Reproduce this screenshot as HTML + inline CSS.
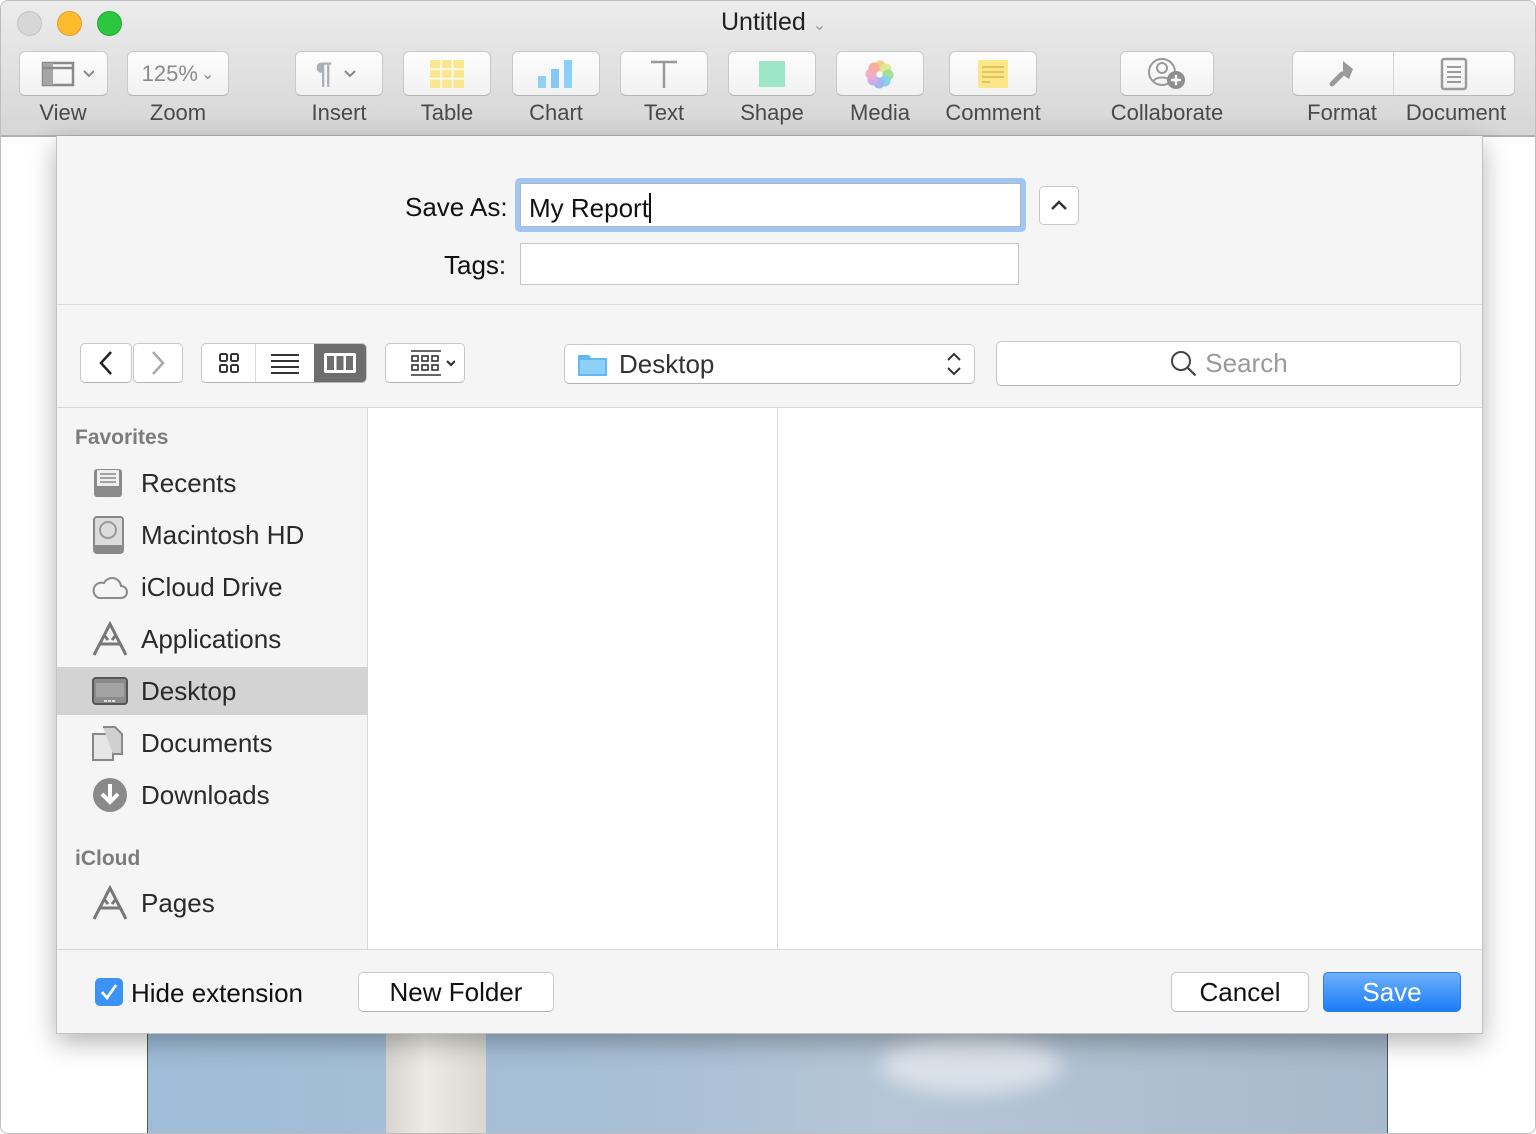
<!DOCTYPE html>
<html><head><meta charset="utf-8">
<style>
*{box-sizing:border-box;margin:0;padding:0}
body{width:1536px;height:1134px;overflow:hidden;background:#fff;font-family:"Liberation Sans",sans-serif;position:relative}
.abs{position:absolute}
#win{position:absolute;left:0;top:0;width:1536px;height:1134px;border:1px solid #bdbdbd;border-radius:8px;overflow:hidden;background:#fff}
#tb{position:absolute;left:0;top:0;width:1536px;height:136px;background:linear-gradient(#ececec,#d6d6d6);border-bottom:2px solid #b0b0b0}
.light{position:absolute;top:10px;width:25px;height:25px;border-radius:50%}
.btn{position:absolute;top:50px;height:45px;background:linear-gradient(#fdfdfd,#f1f1f1);border:1px solid #c9c9c9;border-bottom-color:#b5b5b5;border-radius:6px;display:flex;align-items:center;justify-content:center}
.lbl{position:absolute;top:99px;font-size:22px;color:#4a4a4a;text-align:center;transform:translateX(-50%);white-space:nowrap}
#dlg{position:absolute;left:56px;top:136px;width:1427px;height:898px;background:#f5f5f5;border:1px solid #c2c2c2;border-top:none;box-shadow:0 8px 25px rgba(0,0,0,.3)}
.sb{position:absolute;left:0;width:311px;height:48px;display:flex;align-items:center}
.sb span{position:absolute;left:84px;font-size:26px;color:#2a2a2a}
.sb svg{position:absolute;left:34px}
.pb{position:absolute;height:40px;background:#fff;border:1px solid #c8c8c8;border-bottom-color:#b3b3b3;border-radius:5px;display:flex;align-items:center;justify-content:center;font-size:26px;color:#111}
</style></head><body>
<div id="win">
<div id="tb">
 <div class="light" style="left:16px;background:#d7d7d7;border:1px solid #c3c3c3"></div>
 <div class="light" style="left:56px;background:#fdbb2e;border:1px solid #e1a02a"></div>
 <div class="light" style="left:96px;background:#2bc73f;border:1px solid #22a833"></div>
 <div class="abs" style="left:720px;top:7px;font-size:25px;color:#222">Untitled <span style="color:#999;font-size:16px">&#8964;</span></div>

 <div class="btn" style="left:18px;width:89px"><svg width="60" height="30"><rect x="9" y="4" width="30" height="22" fill="none" stroke="#8a8a8a" stroke-width="2.5"/><rect x="9" y="4" width="10" height="22" fill="#a5a5a5"/><line x1="9" y1="9" x2="39" y2="9" stroke="#8a8a8a" stroke-width="2.5"/><path d="M50 12l5 5 5-5" fill="none" stroke="#888" stroke-width="2"/></svg></div>
 <div class="btn" style="left:126px;width:102px;font-size:22px;color:#8a8a8a">125%<span style="font-size:16px;margin-left:3px">&#8964;</span></div>
 <div class="btn" style="left:294px;width:88px"><span style="font-size:30px;color:#aab0b8;font-weight:bold">¶</span><svg width="30" height="20"><path d="M13 7l5 5 5-5" fill="none" stroke="#888" stroke-width="2"/></svg></div>
 <div class="btn" style="left:402px;width:88px"><svg width="34" height="28"><rect width="34" height="28" fill="#fbe690"/><path d="M0 9.3h34M0 18.6h34M11.3 0v28M22.6 0v28" stroke="#fff" stroke-width="1.5"/></svg></div>
 <div class="btn" style="left:511px;width:88px"><svg width="36" height="28"><rect x="0" y="16" width="8" height="12" fill="#8fd0f3"/><rect x="13" y="9" width="8" height="19" fill="#86c9f0"/><rect x="26" y="0" width="8" height="28" fill="#8ccff6"/></svg></div>
 <div class="btn" style="left:619px;width:88px"><svg width="30" height="30"><path d="M2 3h26M15 3v26" stroke="#9a9a9a" stroke-width="2.5"/></svg></div>
 <div class="btn" style="left:727px;width:88px"><div style="width:26px;height:26px;background:#9ee6c8"></div></div>
 <div class="btn" style="left:835px;width:88px"><svg width="30" height="30"><g opacity=".8"><circle cx="15" cy="7" r="5.5" fill="#f9c56c"/><circle cx="21" cy="10" r="5.5" fill="#d6e97a"/><circle cx="23" cy="16" r="5.5" fill="#8fdb7d"/><circle cx="20" cy="22" r="5.5" fill="#6ec6e8"/><circle cx="14" cy="24" r="5.5" fill="#89a8ef"/><circle cx="8" cy="21" r="5.5" fill="#c29be8"/><circle cx="6" cy="15" r="5.5" fill="#ef9dc0"/><circle cx="9" cy="9" r="5.5" fill="#f59c8c"/></g></svg></div>
 <div class="btn" style="left:948px;width:88px"><svg width="30" height="28"><rect width="30" height="28" fill="#fce68a"/><path d="M4 7h22M4 12h22M4 17h22M4 22h8" stroke="#d9b950" stroke-width="1.5"/></svg></div>
 <div class="btn" style="left:1119px;width:94px"><svg width="44" height="34"><circle cx="17" cy="15" r="13" fill="none" stroke="#999" stroke-width="2"/><circle cx="17" cy="11" r="5" fill="none" stroke="#999" stroke-width="2"/><path d="M8 25c2-6 16-6 18 0" fill="none" stroke="#999" stroke-width="2"/><circle cx="31" cy="23" r="9" fill="#8e8e8e"/><path d="M31 18v10M26 23h10" stroke="#fff" stroke-width="2.5"/></svg></div>
 <div class="btn" style="left:1291px;width:223px;justify-content:flex-start">
  <div style="width:101px;height:100%;border-right:1px solid #d5d5d5;display:flex;align-items:center;justify-content:center"><svg width="34" height="32"><path d="M17 3l10 8-4 10-6-4z" fill="#9a9a9a"/><path d="M16 16l-10 10" stroke="#9a9a9a" stroke-width="5" stroke-linecap="round"/></svg></div>
  <div style="flex:1;display:flex;align-items:center;justify-content:center"><svg width="28" height="34"><rect x="2" y="2" width="24" height="30" rx="2" fill="none" stroke="#9a9a9a" stroke-width="2.5"/><path d="M7 10h14M7 15h14M7 20h14M7 25h14" stroke="#9a9a9a" stroke-width="2"/></svg></div>
 </div>

 <div class="lbl" style="left:62px">View</div>
 <div class="lbl" style="left:177px">Zoom</div>
 <div class="lbl" style="left:338px">Insert</div>
 <div class="lbl" style="left:446px">Table</div>
 <div class="lbl" style="left:555px">Chart</div>
 <div class="lbl" style="left:663px">Text</div>
 <div class="lbl" style="left:771px">Shape</div>
 <div class="lbl" style="left:879px">Media</div>
 <div class="lbl" style="left:992px">Comment</div>
 <div class="lbl" style="left:1166px">Collaborate</div>
 <div class="lbl" style="left:1341px">Format</div>
 <div class="lbl" style="left:1455px">Document</div>
</div>

<div class="abs" style="left:146px;top:1033px;width:1241px;height:101px;background:linear-gradient(90deg,#9fbdd8,#a8bfd6 40%,#b6c6d6 60%,#a7b9cc);border-left:1px solid #555;border-right:1px solid #555"></div>
<div class="abs" style="left:385px;top:1033px;width:100px;height:101px;background:linear-gradient(90deg,#d6d4cc,#ecebe6 40%,#d9d7d0)"></div>
<div class="abs" style="left:880px;top:1033px;width:180px;height:60px;border-radius:50%;background:rgba(235,238,242,.7);filter:blur(10px)"></div>
</div>

<div id="dlg">
 <div class="abs" style="left:0;top:0;width:1425px;height:169px;border-bottom:1px solid #dadada"></div>
 <div class="abs" style="left:348px;top:56px;font-size:26px;color:#111">Save As:</div>
 <div class="abs" style="left:458px;top:42px;width:511px;height:54px;background:#9fc6f5;border-radius:5px"></div>
 <div class="abs" style="left:463px;top:47px;width:501px;height:44px;background:#fff;border:1px solid #b5b5b5;font-size:26px;color:#111;padding:9px 0 0 8px">My Report<span style="display:inline-block;width:2px;height:30px;background:#111;vertical-align:-6px"></span></div>
 <div class="abs" style="left:982px;top:50px;width:40px;height:39px;background:#fff;border:1px solid #c8c8c8;border-radius:5px"><svg width="38" height="37"><path d="M12 22l7-7 7 7" fill="none" stroke="#333" stroke-width="2.5"/></svg></div>
 <div class="abs" style="left:387px;top:114px;font-size:26px;color:#111">Tags:</div>
 <div class="abs" style="left:463px;top:107px;width:499px;height:42px;background:#fff;border:1px solid #c5c5c5"></div>

 <div class="abs" style="left:0;top:170px;width:1425px;height:102px;border-bottom:1px solid #d8d8d8"></div>
 <div class="pb" style="left:23px;top:207px;width:52px"><svg width="20" height="28"><path d="M15 3L5 14l10 11" fill="none" stroke="#222" stroke-width="2.5"/></svg></div>
 <div class="pb" style="left:76px;top:207px;width:50px"><svg width="20" height="28"><path d="M5 3l10 11L5 25" fill="none" stroke="#aaa" stroke-width="2.5"/></svg></div>
 <div class="pb" style="left:144px;top:207px;width:166px;justify-content:flex-start;overflow:hidden">
  <div style="width:54px;height:100%;display:flex;align-items:center;justify-content:center;border-right:1px solid #ddd"><svg width="22" height="22"><g fill="none" stroke="#333" stroke-width="2"><rect x="2" y="2" width="7" height="7" rx="1.5"/><rect x="13" y="2" width="7" height="7" rx="1.5"/><rect x="2" y="13" width="7" height="7" rx="1.5"/><rect x="13" y="13" width="7" height="7" rx="1.5"/></g></svg></div>
  <div style="width:58px;height:100%;display:flex;align-items:center;justify-content:center"><svg width="30" height="22"><path d="M1 3h28M1 9h28M1 15h28M1 21h28" stroke="#333" stroke-width="2"/></svg></div>
  <div style="flex:1;height:100%;background:#6d6d6d;display:flex;align-items:center;justify-content:center"><svg width="34" height="22"><rect x="1" y="1" width="32" height="20" rx="2" fill="#fff"/><rect x="4" y="4" width="7" height="14" fill="#6d6d6d"/><rect x="13.5" y="4" width="7" height="14" fill="#6d6d6d"/><rect x="23" y="4" width="7" height="14" fill="#6d6d6d"/></svg></div>
 </div>
 <div class="pb" style="left:328px;top:207px;width:80px"><svg width="60" height="30"><g fill="none" stroke="#333" stroke-width="1.6"><path d="M16 3h30M16 27h30"/><rect x="17" y="8" width="6" height="5"/><rect x="27" y="8" width="6" height="5"/><rect x="37" y="8" width="6" height="5"/><rect x="17" y="17" width="6" height="5"/><rect x="27" y="17" width="6" height="5"/><rect x="37" y="17" width="6" height="5"/></g><path d="M52 13l4 4 4-4" fill="none" stroke="#333" stroke-width="2.2"/></svg></div>
 <div class="pb" style="left:507px;top:208px;width:411px;justify-content:flex-start">
  <svg width="32" height="26" style="margin-left:12px"><path d="M1 4h11l2 3h16v18H1z" fill="#62b8f0"/><rect x="3" y="9" width="25" height="14" fill="#8fd0f8"/></svg>
  <span style="margin-left:10px;font-size:26px;color:#333">Desktop</span>
  <svg width="20" height="32" style="position:absolute;right:10px"><path d="M4 12l6-6 6 6M4 20l6 6 6-6" fill="none" stroke="#333" stroke-width="2"/></svg>
 </div>
 <div class="pb" style="left:939px;top:205px;width:465px;height:45px;color:#999">
  <svg width="30" height="30"><circle cx="12" cy="12" r="9" fill="none" stroke="#444" stroke-width="2"/><path d="M18.5 18.5l8 8" stroke="#444" stroke-width="2.2"/></svg>
  <span style="margin-left:6px">Search</span>
 </div>

 <!-- sidebar -->
 <div class="abs" style="left:0;top:272px;width:311px;height:541px;border-right:1px solid #d8d8d8"></div>
 <div class="abs" style="left:18px;top:290px;font-size:21px;color:#7c7c7c;font-weight:bold">Favorites</div>
 <div class="sb" style="top:323px"><svg width="34" height="34"><rect x="3" y="3" width="28" height="28" rx="3" fill="#8a8a8a"/><rect x="6" y="4" width="22" height="16" fill="#eee"/><path d="M9 8h16M9 12h16M9 16h16" stroke="#888" stroke-width="1.5"/></svg><span>Recents</span></div>
 <div class="sb" style="top:375px"><svg width="34" height="38"><rect x="3" y="1" width="29" height="36" rx="3" fill="#dcdcdc" stroke="#888" stroke-width="2"/><circle cx="17" cy="14" r="8" fill="none" stroke="#999" stroke-width="2"/><rect x="3" y="29" width="29" height="8" fill="#8a8a8a"/></svg><span>Macintosh HD</span></div>
 <div class="sb" style="top:427px"><svg width="38" height="30"><path d="M8 26h22a6 6 0 0 0 0-12 9 9 0 0 0-17-3 7 7 0 0 0-5 15z" fill="none" stroke="#8a8a8a" stroke-width="2"/></svg><span>iCloud Drive</span></div>
 <div class="sb" style="top:479px"><svg width="38" height="36"><path d="M3 34L19 3l16 31M8 23h22M13 14l4 5M25 14l-4 5" fill="none" stroke="#777" stroke-width="3"/></svg><span>Applications</span></div>
 <div class="sb" style="top:531px;background:#d3d3d3"><svg width="38" height="30"><rect x="2" y="2" width="34" height="26" rx="3" fill="#8b8b8b" stroke="#555" stroke-width="2"/><rect x="5" y="7" width="28" height="14" fill="#a3a3a3"/><path d="M13 25h12" stroke="#ddd" stroke-width="2" stroke-dasharray="3 1"/></svg><span>Desktop</span></div>
 <div class="sb" style="top:583px"><svg width="34" height="36"><path d="M2 9h14l6 6v20H2z" fill="#e6e6e6" stroke="#888" stroke-width="2"/><path d="M12 2h12l7 7v20h-9" fill="#d0d0d0" stroke="#888" stroke-width="2"/></svg><span>Documents</span></div>
 <div class="sb" style="top:635px"><svg width="38" height="38"><circle cx="19" cy="19" r="17" fill="#8a8a8a"/><path d="M19 8v16M11 18l8 8 8-8" fill="none" stroke="#fff" stroke-width="4"/></svg><span>Downloads</span></div>
 <div class="abs" style="left:18px;top:711px;font-size:21px;color:#7c7c7c;font-weight:bold">iCloud</div>
 <div class="sb" style="top:743px"><svg width="38" height="36"><path d="M3 34L19 3l16 31M8 23h22M13 14l4 5M25 14l-4 5" fill="none" stroke="#777" stroke-width="3"/></svg><span>Pages</span></div>

 <div class="abs" style="left:311px;top:272px;width:410px;height:541px;background:#fff;border-right:1px solid #dcdcdc"></div>
 <div class="abs" style="left:721px;top:272px;width:704px;height:541px;background:#fff"></div>
 <div class="abs" style="left:0;top:813px;width:1425px;height:1px;background:#d8d8d8"></div>

 <div class="abs" style="left:38px;top:842px;width:28px;height:28px;background:#3b93f5;border-radius:5px"><svg width="28" height="28"><path d="M7 14l5 6 9-13" fill="none" stroke="#fff" stroke-width="2.8"/></svg></div>
 <div class="abs" style="left:74px;top:842px;font-size:26px;color:#111">Hide extension</div>
 <div class="pb" style="left:301px;top:836px;width:196px">New Folder</div>
 <div class="pb" style="left:1114px;top:836px;width:138px">Cancel</div>
 <div class="pb" style="left:1266px;top:836px;width:138px;background:linear-gradient(#6fb1fb,#1a7cf7);border-color:#2b7de6;color:#fff">Save</div>
</div>
</body></html>
